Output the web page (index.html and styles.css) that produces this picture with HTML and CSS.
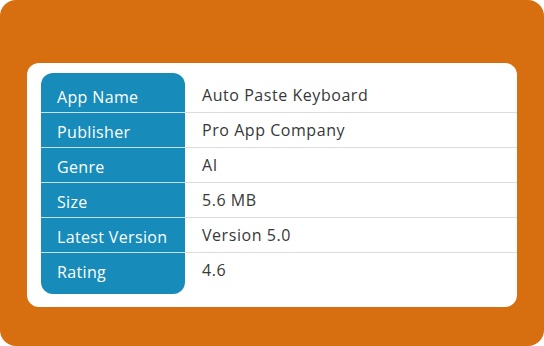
FILE: index.html
```html
<!doctype html>
<html lang="en">
<head>
  <meta charset="utf-8">
  <title>App Info</title>
  <link rel="stylesheet" href="styles.css">
</head>
<body>
  <div class="frame">
    <div class="card">
      <div class="info-table">
        <div class="row first">
          <div class="label">App Name</div>
          <div class="value">Auto Paste Keyboard</div>
        </div>
        <div class="row">
          <div class="label">Publisher</div>
          <div class="value">Pro App Company</div>
        </div>
        <div class="row">
          <div class="label">Genre</div>
          <div class="value">AI</div>
        </div>
        <div class="row">
          <div class="label">Size</div>
          <div class="value">5.6 MB</div>
        </div>
        <div class="row">
          <div class="label">Latest Version</div>
          <div class="value">Version 5.0</div>
        </div>
        <div class="row last">
          <div class="label">Rating</div>
          <div class="value">4.6</div>
        </div>
      </div>
    </div>
  </div>
</body>
</html>
```

FILE: styles.css
```css
body {
  margin: 0;
  background: #fff;
  font-family: "Open Sans", Arial, sans-serif;
}
.frame {
  height: 346px;
  box-sizing: border-box;
  padding: 63px 27px 39px;
  background: #d76e0f;
  border-radius: 16px;
}
.card {
  height: 244px;
  box-sizing: border-box;
  padding: 10px 0 0 14px;
  background: #fff;
  border-radius: 12px;
}
.row {
  display: flex;
  height: 35px;
  box-sizing: border-box;
  border-bottom: 1px solid #dcdcdc;
}
.label {
  width: 144px;
  flex: none;
  box-sizing: border-box;
  padding: 7px 0 0 16px;
  margin-bottom: -1px;
  border-bottom: 1px solid rgba(255, 255, 255, 0.75);
  background: #178cbb;
  color: #fff;
  font-size: 16px;
  line-height: 24px;
  letter-spacing: 0.35px;
}
.value {
  padding: 5px 0 0 17px;
  color: #383838;
  font-size: 16px;
  line-height: 24px;
  letter-spacing: 0.55px;
}
.row.first {
  height: 40px;
}
.row.first .label {
  padding-top: 12px;
  border-radius: 12px 12px 0 0;
}
.row.first .value {
  padding-top: 10px;
}
.row.last {
  height: 41px;
  border-bottom: none;
}
.row.last .label {
  margin-bottom: 0;
  border-bottom: none;
  border-radius: 0 0 12px 12px;
}
```
